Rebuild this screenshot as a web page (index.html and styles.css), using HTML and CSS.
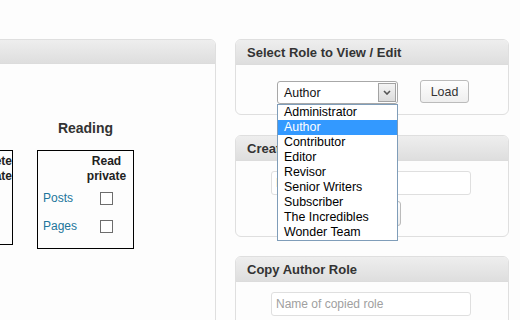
FILE: index.html
```html
<!DOCTYPE html>
<html>
<head>
<meta charset="utf-8">
<link rel="stylesheet" href="styles.css">
</head>
<body>
<div class="page">
  <div class="left-col">
    <div class="postbox wide">
      <div class="hd"></div>
      <div class="bd caps">
        <div class="group">
          <div class="cap-box short">
            <div class="cap-head"></div>
            <div class="cap-head right">Delete<br>private</div>
            <div class="cap-label"></div><div class="cap-cell"><span class="cb"></span></div>
            <div class="cap-label"></div><div class="cap-cell"><span class="cb"></span></div>
          </div>
        </div>
        <div class="group">
          <h4 class="group-title">Reading</h4>
          <div class="cap-box">
            <div class="cap-head"></div>
            <div class="cap-head">Read<br>private</div>
            <div class="cap-label">Posts</div><div class="cap-cell"><span class="cb"></span></div>
            <div class="cap-label">Pages</div><div class="cap-cell"><span class="cb"></span></div>
          </div>
        </div>
      </div>
    </div>
  </div>
  <div class="right-col">
    <div class="postbox">
      <div class="hd">Select Role to View / Edit</div>
      <div class="bd select-row">
        <div class="select">
          <span class="select-value">Author</span>
          <span class="select-arrow"><svg width="8" height="5" viewBox="0 0 8 5"><path d="M1 1 L4 4 L7 1" fill="none" stroke="#555" stroke-width="1.6"/></svg></span>
          <ul class="dropdown">
            <li>Administrator</li>
            <li class="selected">Author</li>
            <li>Contributor</li>
            <li>Editor</li>
            <li>Revisor</li>
            <li>Senior Writers</li>
            <li>Subscriber</li>
            <li>The Incredibles</li>
            <li>Wonder Team</li>
          </ul>
        </div>
        <button class="btn load">Load</button>
      </div>
    </div>
    <div class="postbox second">
      <div class="hd">Create New Role</div>
      <div class="bd form">
        <input class="text-input" type="text" placeholder="Name of new role">
        <div class="btn-wrap"><button class="btn create">Create</button></div>
      </div>
    </div>
    <div class="postbox third">
      <div class="hd">Copy Author Role</div>
      <div class="bd form">
        <input class="text-input" type="text" placeholder="Name of copied role">
        <div class="btn-wrap"><button class="btn create">Copy</button></div>
      </div>
    </div>
  </div>
</div>
</body>
</html>
```

FILE: styles.css
```css
html, body {
  margin: 0;
  padding: 0;
}
body {
  background: #fdfdfd;
  font-family: "Liberation Sans", Arial, sans-serif;
  font-size: 12px;
  color: #333;
  overflow: hidden;
  width: 520px;
  height: 320px;
}
.page {
  display: flex;
  gap: 19px;
  padding-top: 39px;
  align-items: flex-start;
}
.left-col {
  flex: none;
  width: 226px;
  margin-left: -10px;
}
.right-col {
  flex: none;
  width: 274px;
  display: flex;
  flex-direction: column;
}
.postbox {
  border: 1px solid #dfdfdf;
  border-radius: 6px;
  background: #fdfdfd;
  box-sizing: border-box;
}
.postbox .hd {
  height: 24px;
  line-height: 25px;
  padding-left: 11px;
  background: linear-gradient(#eeeeee, #dedede);
  border-bottom: 1px solid #dcdcdc;
  border-radius: 5px 5px 0 0;
  font-size: 13px;
  font-weight: bold;
  color: #333;
  white-space: nowrap;
  overflow: hidden;
}
.wide {
  height: 320px;
}
.wide .hd {
  height: 23px;
  line-height: 24px;
}
.caps {
  display: flex;
  justify-content: flex-end;
  align-items: flex-end;
  gap: 24px;
  padding: 56px 81px 0 0;
}
.group {
  display: flex;
  flex-direction: column;
  align-items: center;
}
.group-title {
  margin: 0 0 13px;
  font-size: 14px;
  line-height: 17px;
  font-weight: bold;
  color: #333;
}
.cap-box {
  display: grid;
  grid-template-columns: 42px 53px;
  grid-template-rows: 33px;
  grid-auto-rows: 28px;
  border: 1px solid #000;
  padding-bottom: 8px;
}
.cap-box.short {
  grid-template-columns: 60px 60px;
  grid-auto-rows: 26px;
  padding-bottom: 8px;
  margin-bottom: 4px;
}
.cap-head {
  grid-row: 1;
  align-self: start;
  height: 30px;
  padding-top: 3px;
  line-height: 15px;
  font-weight: bold;
  text-align: center;
  color: #222;
}
.cap-head.right {
  text-align: right;
}
.cap-label {
  padding-left: 5px;
  color: #21759b;
  display: flex;
  align-items: center;
}
.cap-cell {
  display: flex;
  align-items: center;
  justify-content: center;
}
.cb {
  width: 11px;
  height: 11px;
  border: 1px solid #6d6d6d;
  background: #fff;
}
.select-row {
  display: flex;
  align-items: flex-start;
  gap: 22px;
  padding: 15px 0 10px 41px;
}
.select {
  position: relative;
  margin-top: 1px;
  width: 121px;
  height: 23px;
  box-sizing: border-box;
  border: 1px solid #a8a8a8;
  border-radius: 3px;
  background: #fff;
  display: flex;
  align-items: center;
  justify-content: space-between;
  font-size: 12.4px;
}
.select-value {
  padding-left: 6px;
  color: #111;
}
.select-arrow {
  width: 16px;
  height: 17px;
  margin-right: 1px;
  border: 1px solid #a3a3a3;
  background: linear-gradient(#f4f4f4, #dcdcdc);
  display: flex;
  align-items: center;
  justify-content: center;
}
.dropdown {
  position: absolute;
  top: calc(100% + 1px);
  left: -1px;
  width: 121px;
  box-sizing: border-box;
  margin: 0;
  padding: 0;
  list-style: none;
  border: 1px solid #7f9db9;
  background: #fff;
  z-index: 10;
}
.dropdown li {
  height: 15px;
  line-height: 15px;
  padding-left: 6px;
  color: #000;
  white-space: nowrap;
}
.dropdown li.selected {
  background: #3399ff;
  color: #fff;
}
.btn {
  font-family: "Liberation Sans", Arial, sans-serif;
  font-size: 12.4px;
  color: #333;
  border: 1px solid #bbb;
  border-radius: 3px;
  background: linear-gradient(#fefefe, #eeeeee);
  padding: 0;
  box-sizing: border-box;
}
.load {
  width: 49px;
  height: 23px;
}
.second {
  margin-top: 20px;
}
.third {
  margin-top: 19px;
}
.form {
  display: flex;
  flex-direction: column;
  gap: 6px;
  padding: 10px 0 10px 35px;
}
.text-input {
  width: 200px;
  height: 24px;
  box-sizing: border-box;
  border: 1px solid #dfdfdf;
  border-radius: 3px;
  background: #fff;
  font-family: "Liberation Sans", Arial, sans-serif;
  font-size: 12px;
  padding: 0 4px;
  color: #333;
}
.text-input::placeholder {
  color: #a0a0a0;
}
.btn-wrap {
  width: 200px;
  display: flex;
  justify-content: center;
}
.create {
  width: 60px;
  height: 25px;
}
```
